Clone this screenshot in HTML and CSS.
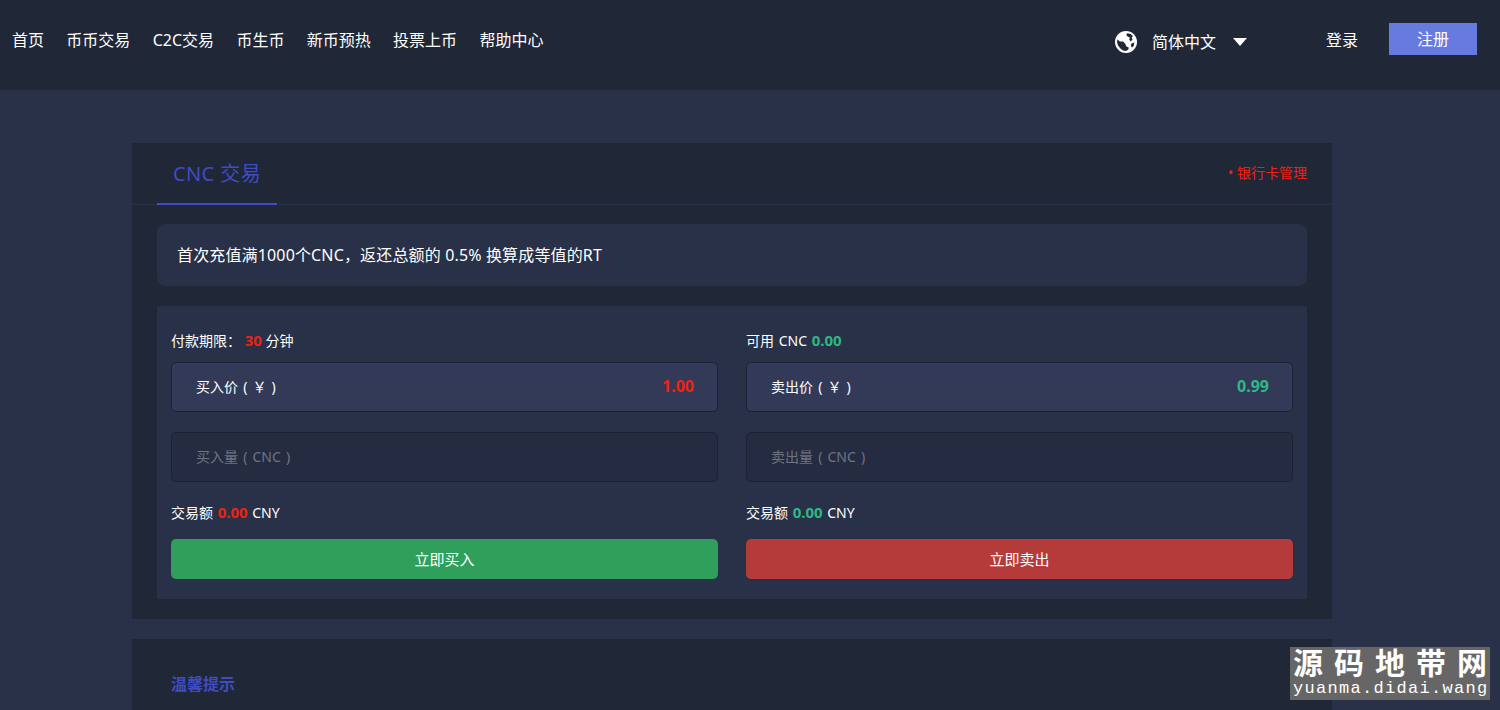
FILE: index.html
```html
<!DOCTYPE html>
<html lang="zh-CN">
<head>
  <meta charset="UTF-8">
  <meta name="viewport" content="width=device-width, initial-scale=1.0">
  <title>CNC 交易</title>
  <link rel="stylesheet" href="styles.css">
</head>
<body>
  <header class="topbar">
    <nav class="nav">
      <a>首页</a>
      <a>币币交易</a>
      <a>C2C交易</a>
      <a>币生币</a>
      <a>新币预热</a>
      <a>投票上币</a>
      <a>帮助中心</a>
    </nav>
    <div class="lang">
      <svg class="globe" width="22" height="22" viewBox="0 0 22 22">
        <circle cx="11" cy="11" r="11" fill="#fff"/>
        <path fill="#202736" d="M2.4 8.6 5 10.4 8.2 10.6 10.4 13 11.4 15.4 13.8 16.4 13.4 18.6 11 20 8 19.6 5.4 17.6 3 14.4 2 11ZM12.4 2.2 15.6 3 18 5 16.6 6.4 17.6 8.6 15.6 10.4 14.2 8.6 14.8 6.6 12.6 5.6 11.2 4ZM16.4 12.6 19.4 11.6 18.8 14.8 17 16.6 15.8 15Z"/>
      </svg>
      <span>简体中文</span>
      <i class="caret"></i>
    </div>
    <a class="login">登录</a>
    <a class="register">注册</a>
  </header>

  <main class="main">
    <section class="panel">
      <div class="tabs">
        <a class="tab">CNC 交易</a>
        <a class="bank">• 银行卡管理</a>
      </div>
      <div class="notice">首次充值满1000个CNC，返还总额的 0.5% 换算成等值的RT</div>
      <div class="trade">
        <div class="col">
          <p class="line">付款期限： <b class="red">30</b> 分钟</p>
          <div class="field price"><span>买入价 ( ￥ )</span><b class="red">1.00</b></div>
          <div class="field"><span class="hint">买入量 ( CNC )</span></div>
          <p class="line wide total">交易额 <b class="red">0.00</b> CNY</p>
          <button class="btn buy">立即买入</button>
        </div>
        <div class="col">
          <p class="line wide">可用 CNC <b class="green">0.00</b></p>
          <div class="field price"><span>卖出价 ( ￥ )</span><b class="green">0.99</b></div>
          <div class="field"><span class="hint">卖出量 ( CNC )</span></div>
          <p class="line wide total">交易额 <b class="green">0.00</b> CNY</p>
          <button class="btn sell">立即卖出</button>
        </div>
      </div>
    </section>
    <section class="panel tips">
      <h3>温馨提示</h3>
    </section>
  </main>

  <div class="stamp">
    <div class="stamp-cn">源码地带网</div>
    <div class="stamp-en">yuanma.didai.wang</div>
  </div>
</body>
</html>
```

FILE: styles.css
```css
html, body {
  height: 710px;
  overflow: hidden;
}
body {
  margin: 0;
  background-color: #283147;
  color: #fff;
  font-family: "Noto Sans", "Noto Sans CJK SC", sans-serif;
  font-size: 14px;
}
a { color: inherit; text-decoration: none; }
p { margin: 0; }

.topbar {
  display: flex;
  align-items: center;
  height: 90px;
  background-color: #202736;
  padding: 0 23px 0 12px;
  box-sizing: border-box;
}
.nav {
  display: flex;
  gap: 22.33px;
  font-size: 16px;
  line-height: 24px;
  margin-bottom: 10px;
}
.lang {
  display: flex;
  align-items: center;
  margin-left: auto;
  font-size: 16px;
  line-height: 24px;
  margin-bottom: 6px;
}
.globe { margin-right: 15px; }
.caret {
  width: 0;
  height: 0;
  margin-left: 17px;
  border-left: 7px solid transparent;
  border-right: 7px solid transparent;
  border-top: 8px solid #fff;
}
.login {
  margin-left: 79px;
  font-size: 16px;
  line-height: 24px;
  margin-bottom: 10px;
}
.register {
  width: 88px;
  height: 32px;
  margin-left: 31px;
  margin-bottom: 13px;
  background-color: #667ae0;
  text-align: center;
  font-size: 16px;
  line-height: 32px;
}

.main {
  width: 1200px;
  margin: 53px 0 0 132px;
}
.panel {
  background-color: #202736;
  padding: 0 25px 20px;
  margin-bottom: 20px;
}
.tabs {
  display: flex;
  justify-content: space-between;
  align-items: center;
  height: 61px;
  margin: 0 -25px;
  padding: 0 25px;
  border-bottom: 1px solid #283147;
}
.tab {
  width: 120px;
  height: 62px;
  box-sizing: border-box;
  border-bottom: 2px solid #3f4cc4;
  color: #3f4cc4;
  font-size: 20px;
  letter-spacing: .4px;
  line-height: 61px;
  text-align: center;
}
.bank {
  color: #ee2211;
  font-size: 14px;
  margin-bottom: 4px;
}
.notice {
  margin-top: 19px;
  padding: 0 20px;
  height: 62px;
  line-height: 62px;
  font-size: 16px;
  letter-spacing: .15px;
  border-radius: 8px;
  background-color: #283147;
}
.trade {
  display: grid;
  grid-template-columns: 1fr 1fr;
  column-gap: 28px;
  margin-top: 20px;
  padding: 20px 14px;
  background-color: #283147;
}
.col { min-width: 0; }
.line {
  height: 20px;
  line-height: 28px;
  font-size: 14px;
  margin-bottom: 16px;
}
.wide { word-spacing: 1px; }
.red { color: #ee2211; }
.green { color: #2fb786; }
.line b { font-size: 15px; }
.field {
  display: flex;
  justify-content: space-between;
  align-items: center;
  height: 50px;
  box-sizing: border-box;
  padding: 0 23px 2px 24px;
  margin-bottom: 20px;
  border: 1px solid #1c2233;
  border-radius: 5px;
  background-color: #252c41;
  font-size: 14px;
  word-spacing: 1.5px;
}
.price { background-color: #323a58; }
.price b { font-size: 16px; }
.hint { color: #6f7480; }
.total { margin-bottom: 17px; line-height: 20px; }
.btn {
  display: block;
  width: 100%;
  height: 40px;
  padding: 0 0 2px;
  border: 0;
  border-radius: 5px;
  color: #fff;
  font-family: inherit;
  font-size: 15px;
}
.buy { background-color: #309f5c; }
.sell { background-color: #b53a3a; }

.tips { padding-top: 31px; padding-left: 39px; height: 200px; }
.tips h3 {
  margin: 0;
  color: #3f4cc4;
  font-size: 16px;
  line-height: 28px;
}

.stamp {
  position: absolute;
  left: 1290px;
  top: 647px;
  width: 200px;
  height: 53px;
  box-sizing: border-box;
  padding: 0 3px;
  background-color: #666;
  font-family: "Liberation Serif", "Noto Sans CJK SC", serif;
}
.stamp-cn {
  font-size: 30px;
  font-weight: bold;
  line-height: 33px;
  text-align-last: justify;
}
.stamp-en {
  font-family: "Liberation Mono", monospace;
  font-size: 17px;
  line-height: 17px;
  letter-spacing: 1.3px;
  white-space: nowrap;
}
```
